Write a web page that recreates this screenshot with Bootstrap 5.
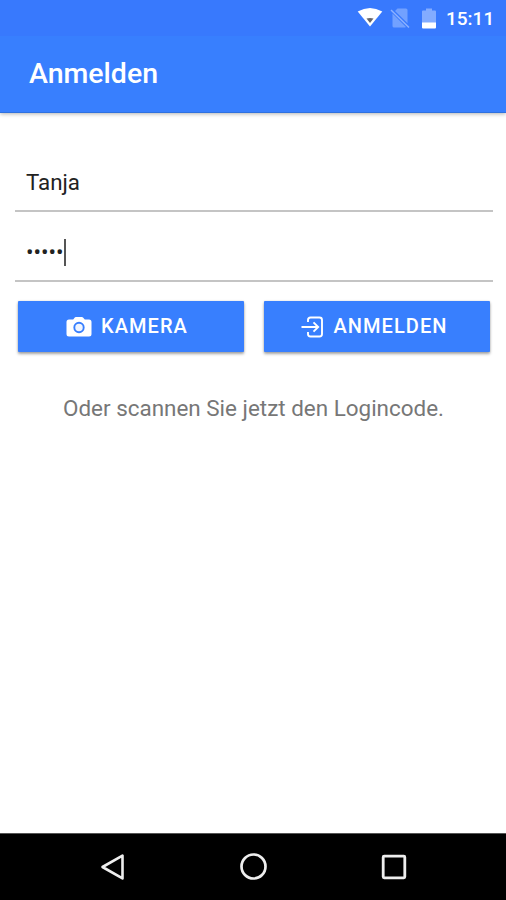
<!DOCTYPE html>
<html lang="de">
<head>
<meta charset="utf-8">
<meta name="viewport" content="width=device-width, initial-scale=1">
<title>Anmelden</title>
<link href="https://cdn.jsdelivr.net/npm/bootstrap@5.3.0/dist/css/bootstrap.min.css" rel="stylesheet">
<style>
body{font-family:Roboto,"Liberation Sans",sans-serif;color:#222;background:#fff;line-height:1}
svg{display:block;flex:none}
.app-head{background:#387ffe;height:113px;border-bottom:1px solid #2f71df;box-shadow:0 1px 4px rgba(0,0,0,.3)}
.status{background:#3879fd;height:36px;padding:0 11px 0 0}
.clock{font-size:19px;font-weight:500;width:49px;margin-left:10px;white-space:nowrap}
.no-sim{margin-left:7px}
.battery{margin-left:12px}
.title{font-size:28.5px;font-weight:500;padding:0 0 0 29px}
.login{padding:42px 13px 0 15px}
.field{height:57px;border-bottom:2px solid #c4c4c4;padding-left:11px;font-size:22.3px}
.field-pass{margin-top:13px}
.caret{width:2px;height:27px;background:#555}
.actions{gap:20px;padding:19px 3px 0 3px}
.act{height:51px;background:#387ffe;border:0;border-radius:1px;font-size:20px;font-weight:500;letter-spacing:1.05px;box-shadow:0 2px 3px rgba(0,0,0,.35),0 0 2px rgba(0,0,0,.15)}
.act-in{gap:9px;margin-right:8px}
.act-login{gap:10px;margin-right:6px}
.act-in span{margin-top:-2px}
.hint{color:#777;font-size:22.45px;padding:45px 1px 0 0;white-space:nowrap}
.android{background:#000;height:67px;border-top:1px solid #555;padding:0 98px 0 99px}
</style>
<script src="https://cdn.jsdelivr.net/npm/bootstrap@5.3.0/dist/js/bootstrap.bundle.min.js"></script>
</head>
<body>
<div class="d-flex flex-column vh-100 overflow-hidden">
  <header class="app-head text-white d-flex flex-column">
    <div class="status d-flex align-items-center justify-content-end">
      <svg width="26" height="20" viewBox="0 0 26 20"><path d="M0.7 3.600Q13-3.600 25.300 3.600L13 18.500Z" fill="#fff"/><path d="M9.500 10.500Q13 9.600 16.500 10.500L13 15Z" fill="#66666a"/></svg>
      <svg class="no-sim" width="20" height="21" viewBox="0 0 20 21"><path d="M7.500.500H16q1.500 0 1.500 1.500v13.200L5 3zM2.500 5.500 16 18.900l-1 .6H4q-1.500 0-1.500-1.500z" fill="#72a1ff"/><path d="M1 2 19 19.500" stroke="#8db2ff" stroke-width="1.500"/></svg>
      <svg class="battery" width="14" height="21" viewBox="0 0 14 21"><path d="M0 3.500Q0 2.500 1 2.500H4V.500h6v2h3q1 0 1 1V15H0z" fill="#83acff"/><path d="M0 14.500h14v5q0 1-1 1H1q-1 0-1-1z" fill="#fff"/></svg>
      <span class="clock">15:11</span>
    </div>
    <h1 class="title mb-0 flex-grow-1 d-flex align-items-center">Anmelden</h1>
  </header>
  <main class="login flex-grow-1">
    <div class="field d-flex align-items-center">Tanja</div>
    <div class="field field-pass d-flex align-items-center"><span>•••••</span><span class="caret"></span></div>
    <div class="actions d-flex">
      <button class="act btn btn-primary flex-fill w-50 p-0 d-flex align-items-center justify-content-center" type="button">
        <span class="act-in d-flex align-items-center">
          <svg width="26" height="22" viewBox="0 0 26 22"><path fill="#fff" d="M3 3.500h4.200L9 1.300Q9.400 1 10 1h6q.6 0 1 .4l1.800 2.100H23q2.500 0 2.500 2.500V18q0 2.500-2.500 2.500H3Q.5 20.500.5 18V6Q.5 3.500 3 3.500z"/><circle cx="13" cy="11.500" r="4.700" fill="#f0f5ff" stroke="#387ffe" stroke-width="1.900"/></svg>
          <span>KAMERA</span>
        </span>
      </button>
      <button class="act btn btn-primary flex-fill w-50 p-0 d-flex align-items-center justify-content-center" type="button">
        <span class="act-in act-login d-flex align-items-center">
          <svg width="23" height="22" viewBox="0 0 23 22" fill="none" stroke="#fff" stroke-width="1.900"><path d="M7 6V4q0-2.500 2.500-2.500h9Q21 1.500 21 4v14q0 2.500-2.500 2.500h-9Q7 20.500 7 18v-2M.5 11H17M12.500 6.300 17.200 11l-4.700 4.700"/></svg>
          <span>ANMELDEN</span>
        </span>
      </button>
    </div>
    <p class="hint text-center mb-0">Oder scannen Sie jetzt den Logincode.</p>
  </main>
  <nav class="android d-flex align-items-center justify-content-between">
    <svg width="28" height="28" viewBox="0 0 28 28" fill="none" stroke="#eee" stroke-width="2.600"><path d="M3.500 14 23.500 2.600V25.400Z" stroke-linejoin="round"/></svg>
    <svg width="28" height="28" viewBox="0 0 28 28" fill="none" stroke="#eee" stroke-width="2.700"><circle cx="13.500" cy="13.500" r="12"/></svg>
    <svg width="28" height="28" viewBox="0 0 28 28" fill="none" stroke="#eee" stroke-width="2.800"><rect x="3.200" y="3.200" width="21.600" height="21.600" rx="1"/></svg>
  </nav>
</div>
</body>
</html>
